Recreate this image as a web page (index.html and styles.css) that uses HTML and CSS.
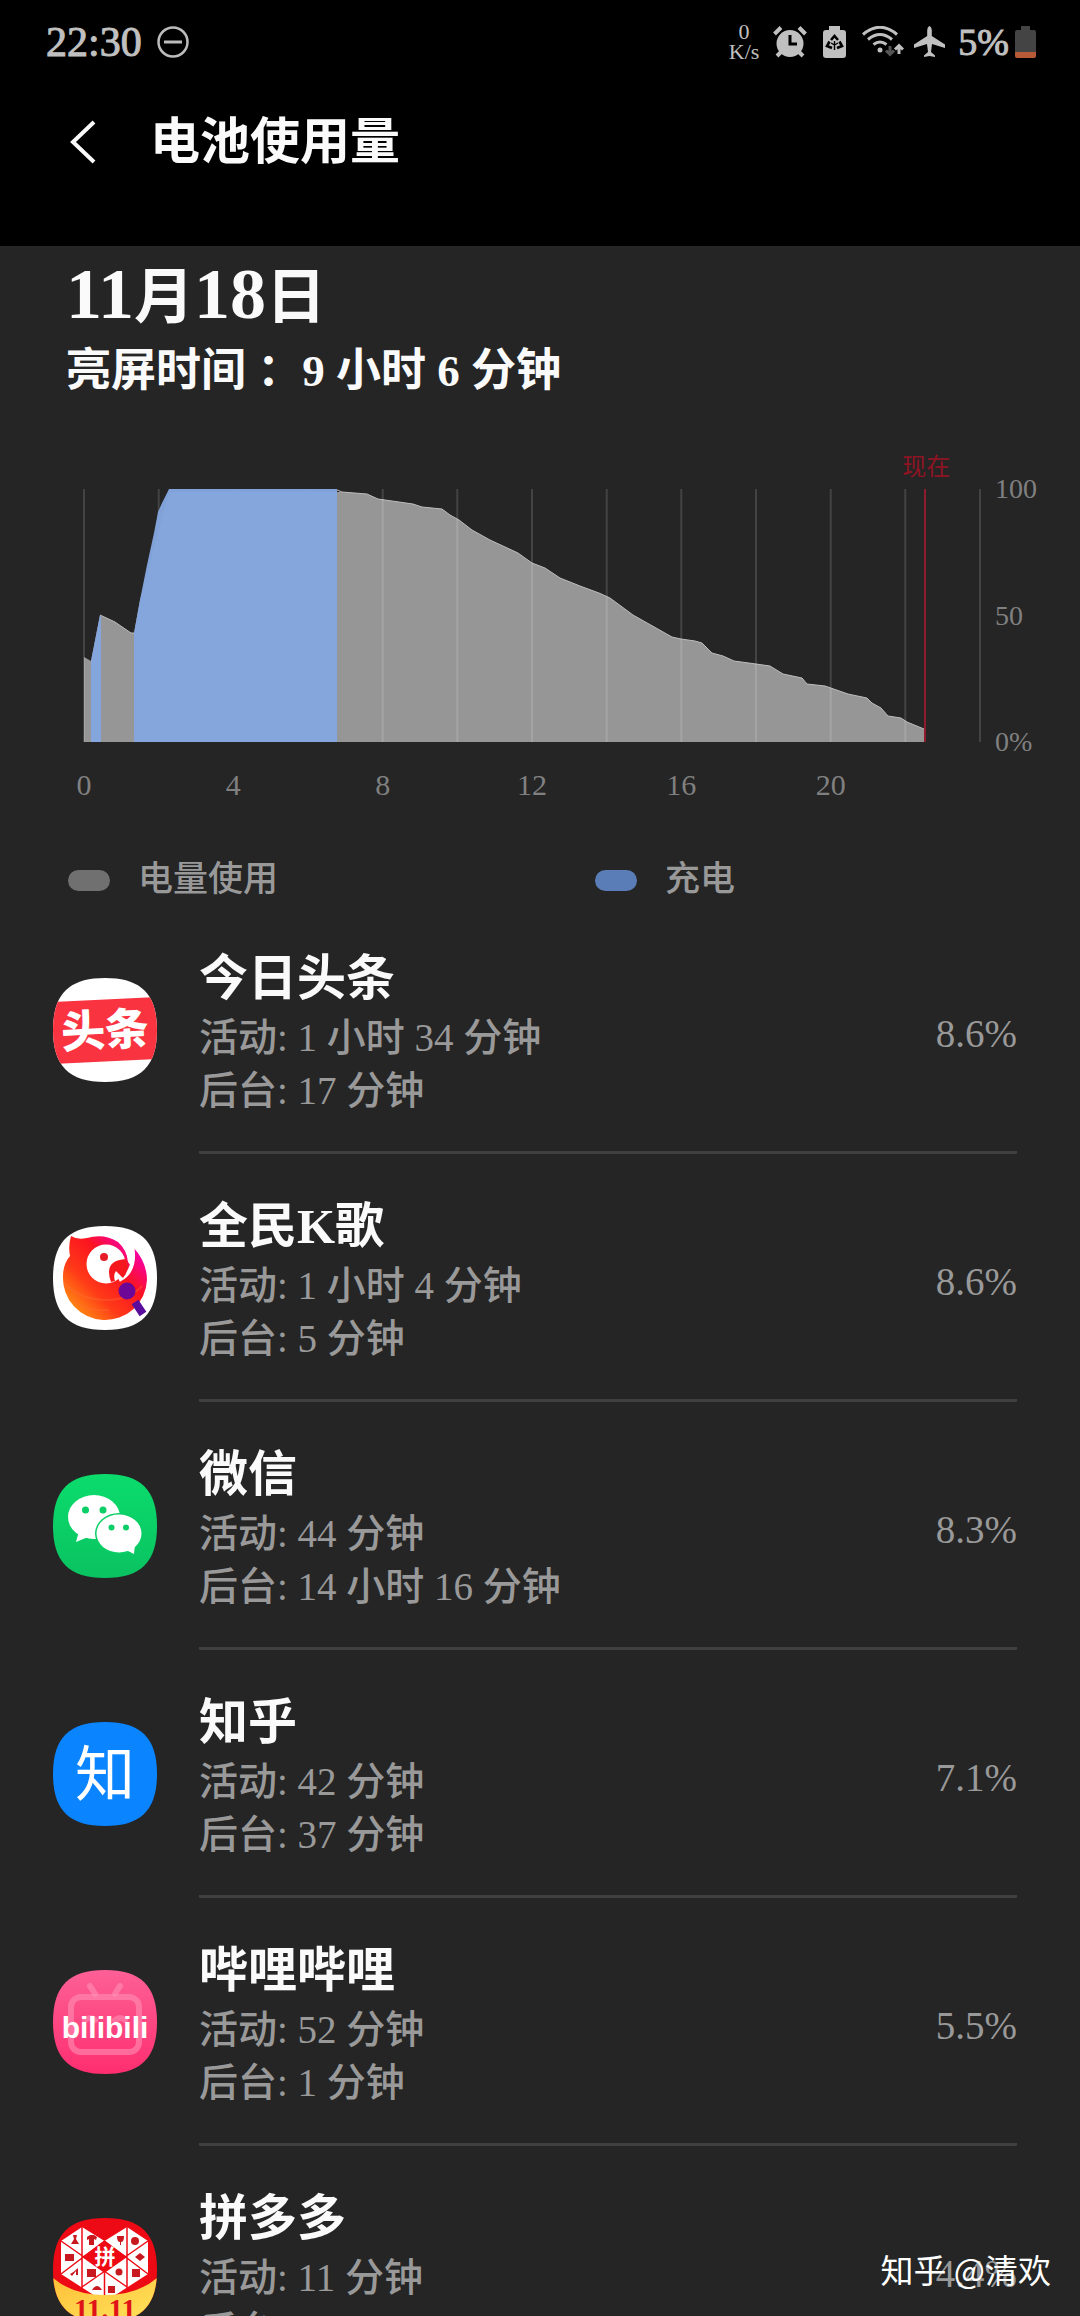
FILE: index.html
```html
<!DOCTYPE html>
<html lang="zh-CN">
<head>
<meta charset="utf-8">
<meta name="viewport" content="width=device-width, initial-scale=1">
<title>电池使用量</title>
<link rel="stylesheet" href="styles.css">
</head>
<body>
<div class="screen">
  <div class="status">
    <time class="clock">22:30</time>
    <svg class="dnd" width="32" height="34" viewBox="0 0 32 34" fill="none" stroke="#bcbcbc"><circle cx="16" cy="17" r="14.5" stroke-width="2.5"/><path d="M7 17h18" stroke-width="3"/></svg>
    <div class="indicators">
      <div class="speed"><span>0</span><span>K/s</span></div>
      <svg class="alarm" width="34" height="32" viewBox="0 0 34 32"><g stroke="#c0c0c0" stroke-width="4"><path d="M1.500 8 8 1.500M26 1.500 32.500 8M9 25l-5 5M25 25l5 5"/></g><circle cx="17" cy="17.500" r="13.500" fill="#c0c0c0"/><path d="M17 9v9h7" fill="none" stroke="#000" stroke-width="3"/></svg>
      <svg class="saver" width="23" height="32" viewBox="0 0 23 32"><path d="M6 0h11v4h3q3 0 3 3v22q0 3-3 3H3q-3 0-3-3V7q0-3 3-3h3z" fill="#c0c0c0"/><path d="M8 14l3.500-4L15 14M16.500 15.500 19 20l-5 2M9 22l-5-2 2.500-4.500" fill="none" stroke="#000" stroke-width="2.600"/><path d="M11.500 15v9M8 17l3.500 2 3.500-2" fill="none" stroke="#000" stroke-width="1.400"/></svg>
      <svg class="wifi" width="42" height="32" viewBox="0 0 42 32" fill="none" stroke="#c0c0c0" stroke-width="3"><path d="M1 8.500Q18-6 35 8.500M6 13.500Q18 3.500 30 13.500M11.500 18.500q6.500-5 13 0"/><circle cx="18" cy="24" r="2.500" fill="#c0c0c0" stroke="none"/><path d="M28 20v8m-4-3.500 4 4 4-4" stroke="#555"/><path d="M37 28v-8m-4 3.500 4-4 4 4"/></svg>
      <svg class="plane" width="33" height="32" viewBox="0 0 33 32"><path fill="#c0c0c0" d="M16.500 0q2.300 1 2.300 5v5L32 18.500V22l-13-4-1 8 4 3.500V31l-5.500-1L11 31v-1.500L15 26l-1-8-13 4v-3.500L14.200 10V5q0-4 2.300-5z"/></svg>
      <span class="level">5%</span>
      <svg class="battery" width="21" height="32" viewBox="0 0 21 32"><path d="M6 0h9v4h4q2 0 2 2v20H0V6q0-2 2-2h4z" fill="#444"/><path d="M0 26h21v4q0 2-2 2H2q-2 0-2-2z" fill="#b85a38"/></svg>
    </div>
  </div>

  <header class="appbar">
    <button class="back" type="button" aria-label="返回"><svg width="26" height="44" viewBox="0 0 26 44"><path d="M24 2 3 22l21 20" fill="none" stroke="#fafafa" stroke-width="4"/></svg></button>
    <h1>电池使用量</h1>
  </header>

  <main>
    <section class="summary">
      <h2><span>11</span>月<span>18</span>日</h2>
      <p>亮屏时间 ：9 小时 6 分钟</p>
    </section>

    <section class="chart">
      <div class="plot">
        <svg class="graph" viewBox="0 0 896 253" preserveAspectRatio="none">
          <path class="used" d="M0 253V168L7 172 16 126 31 133 47 144H50L56 111 85 3H253L258 3 283 5 294 10 329 15 338 18 358 20 366 26 375 31 388 41 406 51 434 64 448 74 461 79 476 89 496 97 515 104 526 109 549 126 588 148 597 150 611 152 618 154 628 164 639 167 650 172 672 175 686 177 699 185 718 189 723 195 741 197 764 205 783 209 788 214 797 219 804 227 817 229 823 233 840 240V253Z"/>
          <path class="edge" d="M16 126 31 133 47 144H50M253 1 258 3 283 5 294 10 329 15 338 18 358 20 366 26 375 31 388 41 406 51 434 64 448 74 461 79 476 89 496 97 515 104 526 109 549 126 588 148 597 150 611 152 618 154 628 164 639 167 650 172 672 175 686 177 699 185 718 189 723 195 741 197 764 205 783 209 788 214 797 219 804 227 817 229 823 233 840 240"/>
          <path class="lines" d="M0 0V253M74.700 0V253M149.300 0V253M224 0V253M298.700 0V253M373.300 0V253M448 0V253M522.700 0V253M597.300 0V253M672 0V253M746.700 0V253M821.300 0V253M896 0V253"/>
          <path class="charge" d="M7 253V172L16 126 17 127V253ZM50 253V144L56 111 63 76 70 44 74 23 78 14 85 0H253V253Z"/>
          <path class="now-line" d="M841 0V253"/>
        </svg>
        <span class="now">现在</span>
      </div>
      <ol class="percent-axis"><li>100</li><li>50</li><li>0%</li></ol>
      <ol class="hour-axis"><li>0</li><li>4</li><li>8</li><li>12</li><li>16</li><li>20</li><li></li></ol>
    </section>

    <ul class="legend">
      <li><i class="swatch"></i>电量使用</li>
      <li><i class="swatch swatch-charge"></i>充电</li>
    </ul>

    <ul class="apps">
      <li class="app">
        <svg class="icon" viewBox="0 0 104 104">
          <defs><clipPath id="shape"><path d="M52 0C88 0 104 16 104 52S88 104 52 104 0 88 0 52 16 0 52 0Z"/></clipPath></defs>
          <g clip-path="url(#shape)"><path fill="#fff" d="M0 0h104v104H0z"/><path fill="#fa3340" d="M0 24 104 19V81L0 86Z"/><text class="mark mark-toutiao" x="52" y="68" transform="rotate(-3 52 52)">头条</text></g>
        </svg>
        <div class="info">
          <div><h3>今日头条</h3><p>活动: 1 小时 34 分钟</p><p>后台: 17 分钟</p></div>
          <span class="share">8.6%</span>
        </div>
      </li>
      <li class="app">
        <svg class="icon" viewBox="0 0 104 104">
          <defs>
            <linearGradient id="bird" x1="0" y1="1" x2="1" y2="0"><stop offset=".08" stop-color="#ff9a10"/><stop offset=".36" stop-color="#ff3a18"/><stop offset=".62" stop-color="#fb1420"/><stop offset=".84" stop-color="#f800a0"/></linearGradient>
          </defs>
          <g clip-path="url(#shape)"><path fill="#fff" d="M0 0h104v104H0z"/>
          <path fill="url(#bird)" d="M18 10q6 4 16 2 17-5 31 4 9 8 10 20l3 4q5-9 2-19 14 15 14 33a42 42 0 1 1-84-4q0-12 7-20Q15 20 18 10Z"/>
          <path d="M12 58q16 16 42 16 22 0 35-14M20 74q14 12 36 10" fill="none" stroke="#ff7038" stroke-opacity=".35" stroke-width="2"/>
          <circle cx="53" cy="38" r="19.500" fill="#fff"/>
          <path d="M79 19q5 26-13 35" fill="none" stroke="#fff" stroke-width="4"/>
          <path fill="#f4181e" d="M73 33Q56 34 56 46q0 5 2 10l4-1q-2-6 1-10l7 7q8-10 3-19Z"/>
          <circle cx="51" cy="31" r="4" fill="#e81c28"/>
          <path d="m82 76 8 12" stroke="#5a0c9c" stroke-width="8"/><circle cx="74" cy="65" r="8.500" fill="#6c0798"/></g>
        </svg>
        <div class="info">
          <div><h3>全民K歌</h3><p>活动: 1 小时 4 分钟</p><p>后台: 5 分钟</p></div>
          <span class="share">8.6%</span>
        </div>
      </li>
      <li class="app">
        <svg class="icon" viewBox="0 0 104 104">
          <defs><linearGradient id="green" x1="0" y1="0" x2="0" y2="1"><stop stop-color="#0bdc6c"/><stop offset="1" stop-color="#0ac261"/></linearGradient></defs>
          <g clip-path="url(#shape)"><path fill="url(#green)" d="M0 0h104v104H0z"/>
          <ellipse cx="41" cy="43" rx="26" ry="22" fill="#fff"/><path fill="#fff" d="m26 57-3 11 12-5z"/>
          <ellipse cx="66" cy="59.500" rx="24" ry="20.500" fill="#0bce66"/><ellipse cx="66" cy="59.500" rx="22.500" ry="19" fill="#fff"/><path fill="#fff" d="m82 70-1 10-10-5z"/>
          <g fill="#0bce66"><circle cx="32.500" cy="36" r="3.500"/><circle cx="50" cy="36" r="3.500"/><circle cx="58.500" cy="53.500" r="3"/><circle cx="73" cy="53.500" r="3"/></g></g>
        </svg>
        <div class="info">
          <div><h3>微信</h3><p>活动: 44 分钟</p><p>后台: 14 小时 16 分钟</p></div>
          <span class="share">8.3%</span>
        </div>
      </li>
      <li class="app">
        <svg class="icon" viewBox="0 0 104 104">
          <g clip-path="url(#shape)"><path fill="#0a84ff" d="M0 0h104v104H0z"/><text class="mark mark-zhihu" x="52" y="74">知</text></g>
        </svg>
        <div class="info">
          <div><h3>知乎</h3><p>活动: 42 分钟</p><p>后台: 37 分钟</p></div>
          <span class="share">7.1%</span>
        </div>
      </li>
      <li class="app">
        <svg class="icon" viewBox="0 0 104 104">
          <defs><linearGradient id="pink" x1="0" y1="0" x2="0" y2="1"><stop stop-color="#fd6096"/><stop offset="1" stop-color="#fe2e70"/></linearGradient></defs>
          <g clip-path="url(#shape)"><path fill="url(#pink)" d="M0 0h104v104H0z"/>
          <g fill="none" stroke="#ff8fb4" stroke-opacity=".6" stroke-width="6" stroke-linecap="round"><rect x="18" y="27" width="68" height="55" rx="10"/><path d="m37 16 5 8M67 16l-5 8M32 50q5-4 10 0M62 50q5-4 10 0"/></g>
          <text class="mark mark-bili" x="52" y="68">bilibili</text></g>
        </svg>
        <div class="info">
          <div><h3>哔哩哔哩</h3><p>活动: 52 分钟</p><p>后台: 1 分钟</p></div>
          <span class="share">5.5%</span>
        </div>
      </li>
      <li class="app">
        <svg class="icon" viewBox="0 0 104 104">
          <defs><linearGradient id="gold" x1="0" y1="0" x2="1" y2="1"><stop stop-color="#ffc038"/><stop offset="1" stop-color="#ffe45c"/></linearGradient></defs>
          <g clip-path="url(#shape)"><path fill="#ee0a14" d="M0 0h104v104H0z"/>
          <path fill="#fff" d="M29 9 51.500 23 74 9 95 23V56L51.500 84 8 56V23Z"/>
          <path fill="#ee0a14" d="M51.500 23 74 39 51.500 55 29 39Z"/>
          <path fill="none" stroke="#ee0a14" stroke-width="1.500" d="M29 9V70M74 9V70M51.500 55V84M8 23 74 69M95 23 29 69M8 56 51.500 23M95 56 51.500 23"/>
          <g fill="#c81820"><path d="M20 17h4l-1 4 3 5h-8l3-5zM34 19l3-2h4l3 2-1 3-2-1v6h-5v-6l-2 1zM64 18h7q0 6-3 6v3h-1v-3q-3 0-3-6z"/><circle cx="82" cy="23" r="4"/><path d="M12 36h9v7h-9zM82 39l5-4 5 4-5 4zM17 56q4-2 8-6v7h-2v-4l-4 5zM34 51h9v8h-9zM79 51h8v8h-8z"/><circle cx="66" cy="54" r="3.500"/><path d="M39 72q5-8 10 0zM55 68h7v7h-7z"/></g>
          <text class="mark mark-pin" x="52" y="46">拼</text>
          <path fill="url(#gold)" d="M0 60q20 17 52 17t52-17v44H0Z"/><text class="mark mark-sale" x="52" y="101">11.11</text></g>
        </svg>
        <div class="info">
          <div><h3>拼多多</h3><p>活动: 11 分钟</p><p>后台:</p></div>
          <span class="share">4.4%</span>
        </div>
      </li>
    </ul>
  </main>
  <span class="watermark">知乎 @清欢</span>
</div>
</body>
</html>
```
FILE: styles.css
```css
* { box-sizing: border-box; }
body {
  margin: 0;
  background: #252525;
  color: #fafafa;
  font-family: "Liberation Serif", "Noto Sans CJK SC", serif;
}
h1, h2, h3, p, ul, ol { margin: 0; padding: 0; }
ul, ol { list-style: none; }
svg { display: block; flex: none; }

.screen { position: relative; height: 100vh; overflow: hidden; }

.status {
  display: flex;
  align-items: center;
  height: 84px;
  padding: 0 44px 0 46px;
  background: #000;
  color: #c0c0c0;
}
.clock { font-size: 42px; -webkit-text-stroke: 1px; }
.dnd { margin-left: 15px; }
.indicators { display: flex; align-items: center; margin-left: auto; }
.speed {
  display: flex;
  flex-direction: column;
  align-items: center;
  font-size: 22px;
  line-height: 20px;
}
.alarm { margin-left: 14px; }
.saver { margin-left: 16px; }
.wifi { margin-left: 16px; }
.plane { margin-left: 9px; }
.level { margin: 0 6px 0 12px; font-size: 38px; -webkit-text-stroke: 1px; }

.appbar {
  display: flex;
  align-items: center;
  gap: 54px;
  padding: 20px 70px 66px;
  background: #000;
}
.back { padding: 0; border: 0; background: none; }
.appbar h1 { font-size: 50px; line-height: 76px; }

.summary { padding: 12px 66px 0; }
.summary h2 { height: 76px; font-size: 60px; line-height: 72px; }
.summary h2 span { font-size: 72px; }
.summary p { margin-top: 9px; font-size: 45px; font-weight: bold; line-height: 56px; }

.chart {
  display: grid;
  grid-template-columns: 1fr 70px;
  column-gap: 15px;
  row-gap: 25px;
  margin-top: 90px;
  padding: 0 15px 0 84px;
  color: #808080;
}
.plot { position: relative; }
.graph { width: 100%; height: 253px; overflow: visible; }
.used { fill: #969696; }
.charge { fill: #84a6df; opacity: .97; }
.edge { fill: none; stroke: #bdbdbd; stroke-width: 1; }
.lines { stroke: #fff; stroke-opacity: .14; stroke-width: 2; }
.now-line { stroke: #8e1c2c; stroke-width: 2; }
.now {
  position: absolute;
  bottom: 100%;
  left: 94%;
  margin-bottom: 8px;
  transform: translateX(-50%);
  color: #8e1424;
  font-size: 24px;
  line-height: 28px;
}
.percent-axis { display: flex; flex-direction: column; justify-content: space-between; font-size: 28px; }
.percent-axis li { display: flex; align-items: center; height: 0; }
.hour-axis { display: flex; justify-content: space-between; height: 36px; font-size: 30px; line-height: 36px; }
.hour-axis li { display: flex; justify-content: center; width: 0; }

.legend {
  display: grid;
  grid-template-columns: 1fr 1fr;
  margin-top: 55px;
  padding: 0 0 0 68px;
  color: #999;
  font-size: 35px;
  font-weight: 500;
  line-height: 44px;
}
.legend li { display: flex; align-items: center; gap: 28px; }
.legend li + li { padding-left: 21px; }
.swatch { width: 42px; height: 21px; border-radius: 11px; background: #707070; }
.swatch-charge { background: #5a7db8; }

.apps { padding: 4px 63px 0 53px; }
.app { display: flex; align-items: center; gap: 42px; }
.icon { width: 104px; height: 104px; }
.info {
  display: flex;
  flex: 1;
  align-items: center;
  justify-content: space-between;
  padding: 43px 0 34px;
  border-bottom: 3px solid #404040;
}
.info h3 { margin-bottom: 2px; font-size: 49px; line-height: 60px; }
.info p, .share { color: #999; font-size: 39px; font-weight: 500; line-height: 53px; }

.mark { fill: #fff; font-family: "Noto Sans CJK SC", sans-serif; text-anchor: middle; }
.mark-toutiao { font-size: 44px; font-weight: 900; }
.mark-zhihu { font-size: 60px; }
.mark-bili { font-family: "Liberation Sans Narrow", "Liberation Sans", sans-serif; font-size: 30px; font-weight: bold; }
.mark-pin { font-size: 21px; font-weight: bold; }
.mark-sale { fill: #e01418; font-family: "Liberation Serif", serif; font-size: 29px; font-weight: bold; }

.watermark {
  position: absolute;
  right: 29px;
  bottom: 25px;
  color: #fff;
  font-family: "Noto Sans CJK SC", sans-serif;
  font-size: 33px;
  line-height: 44px;
}
```
